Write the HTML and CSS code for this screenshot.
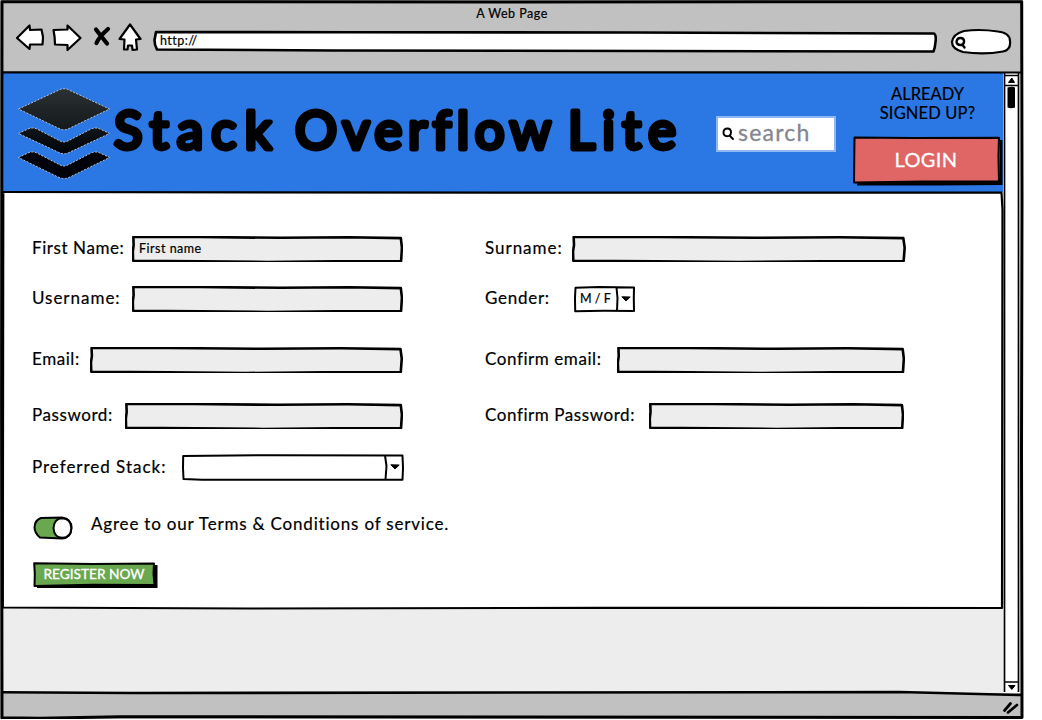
FILE: index.html
```
<!DOCTYPE html>
<html lang="en">
<head>
<meta charset="utf-8">
<title>Stack Overflow Lite</title>
<link rel="stylesheet" href="styles.css">
</head>
<body>
<svg class="defs" aria-hidden="true">
  <symbol id="box" viewBox="0 0 100 100" preserveAspectRatio="none">
    <path class="sketch" d="M.5 4 L25 4 L55 7 L80 5 L99.2 8 L99.600 45 L99.3 96 L75 97 L50 100 L25 97 L.4 95 L.3 60 L.6 35 Z"/>
  </symbol>
  <symbol id="caret" viewBox="0 0 10 6"><path d="M.8 .8 L9.2 1 L5 5 Z" fill="#000" stroke="#000" stroke-linejoin="round"/></symbol>
</svg>
<div class="window">
  <header class="chrome">
    <div class="chrome-title"><span class="t-page">A Web Page</span></div>
    <div class="toolbar">
      <svg class="nav-icons" viewBox="0 0 130 32">
        <g fill="#fff" stroke="#000" stroke-width="2.2" stroke-linejoin="round">
          <path d="M2 15 L14.500 2.500 L15 7 L26.500 6.500 L28 14 L27.500 21.500 L15 21.500 L14.500 26 Z"/>
          <path d="M38.500 7 L52.500 6.500 L52.500 2.500 L65.500 15 L52.500 27 L52.500 22 L40 21.500 Q40 14 38.500 7 Z"/>
          <path d="M115 1.500 L125.500 16 L121 16.500 L122 26.500 L117.500 26.800 L117 22.500 L113 22.500 L112.500 26.500 L109 26.500 L109.500 16.500 L104.500 16 Z"/>
        </g>
        <path d="M81 6.500 L86 13 L92 20.500 M93 6 Q84 14 81.500 20" fill="none" stroke="#000" stroke-width="4.200" stroke-linecap="round"/>
      </svg>
      <div class="address">
        <svg class="outline" viewBox="0 0 784 24" preserveAspectRatio="none"><path class="sketch" d="M3 2 L200 2.300 L480 2.500 L781 3.500 Q783.500 5 782.500 12 Q782 18 780.500 21.500 L500 21 L180 20.500 L4 19.500 Q1.500 15 1.500 10 Z"/></svg>
        <span class="t-url">http://</span>
      </div>
      <svg class="chrome-search" viewBox="0 0 62 28">
        <path d="M14 3 Q30 .8 48 3.500 Q60 5 60 13 Q61 22 53 23.500 Q34 27 13 24 Q2 21 2 14 Q3 6 14 3 Z" fill="#fff" stroke="#000" stroke-width="2.200"/>
        <path d="M6.500 14 Q7 9.500 11 10 Q14.500 10.500 14 14 Q13.500 17 10.500 17 Q7 17 6.500 14 M12.500 17 L14.500 19.500" fill="none" stroke="#000" stroke-width="2.400" stroke-linecap="round"/>
      </svg>
    </div>
  </header>
  <div class="viewport">
    <main class="page">
      <section class="banner">
        <svg class="logo" viewBox="0 0 92 92">
          <defs><linearGradient id="top" x1="0" y1="0" x2="0" y2="1"><stop offset="0" stop-color="#2b3033"/><stop offset="1" stop-color="#14191b"/></linearGradient>
          <linearGradient id="mid" x1="0" y1="0" x2="0" y2="1"><stop offset="0" stop-color="#10161a"/><stop offset="1" stop-color="#000207"/></linearGradient></defs>
          <g stroke="#c8cdd6" stroke-width=".9" stroke-dasharray="2 1.500" stroke-linejoin="round">
            <path fill="url(#top)" d="M.5 21 L40 2.500 Q46 -1 52 2.500 L91.500 21 L52 40 Q46 43.500 40 40 Z"/>
            <path fill="url(#mid)" d="M.5 45.500 L10 41 Q14 39 19 41 L42 53 Q46 55 50 53 L73 41 Q78 39 82 41 L91.500 45.500 L52 64 Q46 67.500 40 64 Z"/>
            <path fill="#02030a" d="M.5 69.500 L10 65 Q14 63 19 65 L42 77 Q46 79 50 77 L73 65 Q78 63 82 65 L91.500 69.500 L52 89 Q46 92 40 89 Z"/>
          </g>
        </svg>
        <svg class="brand" viewBox="0 0 570 70"><text y="50.500"><tspan x="4" textLength="157.500">Stack</tspan> <tspan x="185" textLength="255">Overflow</tspan> <tspan x="458" textLength="108">Lite</tspan></text></svg>
        <div class="search">
          <svg class="search-icon" viewBox="0 0 12 14"><path d="M1.500 5.500 Q1.500 1.500 5.500 1.500 Q9 1.500 9 5.500 Q8.800 9.200 5 9.200 Q1.500 9 1.500 5.500 M8 9 L11 12" fill="none" stroke="#000" stroke-width="1.900" stroke-linecap="round"/></svg>
          <span class="t-search">search</span>
        </div>
        <div class="account">
          <p class="hint"><span class="t-already">ALREADY</span><br><span class="t-signed">SIGNED UP?</span></p>
          <div class="btn login">
            <svg class="outline" viewBox="0 0 148 50" preserveAspectRatio="none"><path d="M5 44 L146 44 V4 H148.500 V49 L80 49.500 L4 49.500 Z" fill="#000"/><path class="sketch thin" d="M1.500 1.500 L60 2 L145 1.800 L144.500 20 L145 45.500 L70 45.500 L1 46.500 L1.200 25 Z"/></svg>
            <span class="t-login">LOGIN</span>
          </div>
        </div>
      </section>
      <section class="form">
        <div class="row r1">
          <div class="cell"><label class="t-first">First Name:</label><div class="field"><svg class="outline"><use href="#box"/></svg><span class="t-value">First name</span></div></div>
          <div class="cell"><label class="t-sur">Surname:</label><div class="field surname"><svg class="outline"><use href="#box"/></svg></div></div>
        </div>
        <div class="row r2">
          <div class="cell"><label class="t-user">Username:</label><div class="field"><svg class="outline"><use href="#box"/></svg></div></div>
          <div class="cell"><label class="t-gender">Gender:</label>
            <div class="select gender"><svg class="outline" viewBox="0 0 61 26"><path class="sketch thin" d="M1.500 1.800 L25 1 L60 1.500 L59.800 12 L60 25 L30 24.800 L1.200 25.200 L1 12 Z M42.500 1.500 L43.500 12 L43 25"/></svg><span class="t-mf">M / F</span><svg class="caret"><use href="#caret"/></svg></div></div>
        </div>
        <div class="row r3">
          <div class="cell"><label class="t-email">Email:</label><div class="field email"><svg class="outline"><use href="#box"/></svg></div></div>
          <div class="cell"><label class="t-cemail">Confirm email:</label><div class="field cemail"><svg class="outline"><use href="#box"/></svg></div></div>
        </div>
        <div class="row r4">
          <div class="cell"><label class="t-pass">Password:</label><div class="field pass"><svg class="outline"><use href="#box"/></svg></div></div>
          <div class="cell"><label class="t-cpass">Confirm Password:</label><div class="field cpass"><svg class="outline"><use href="#box"/></svg></div></div>
        </div>
        <div class="row r5">
          <div class="cell"><label class="t-stack">Preferred Stack:</label>
            <div class="select stack"><svg class="outline" viewBox="0 0 222 27"><path class="sketch thin" d="M1.200 2 L90 1.200 L220.500 1.500 L221 14 L220.500 25.700 L20 25.800 L1.500 25 L1 14 Z M203 1.500 L204.500 12 L203.500 25.500"/></svg><svg class="caret"><use href="#caret"/></svg></div></div>
        </div>
        <div class="terms">
          <svg class="toggle" viewBox="0 0 40 24"><path fill="#6aa84f" stroke="#000" stroke-width="2" d="M8 2 L29 1.500 Q38.500 3 38.500 12 Q38 22 29 22.500 L7 21.500 Q1.500 17 1.500 11 Q2 4 8 2 Z"/><path fill="#fff" stroke="#000" stroke-width="2" d="M20.500 12 Q21 2.500 29.500 2.300 Q38 3 38.300 12 Q38 21.500 29.500 21.800 Q21 21.500 20.500 12 Z"/></svg>
          <span class="t-terms">Agree to our Terms &amp; Conditions of service.</span>
        </div>
        <div class="btn register">
          <svg class="outline" viewBox="0 0 125 26" preserveAspectRatio="none"><path d="M4 22 L121 22 V3 H124.500 V26 H4 Z" fill="#000"/><path class="sketch thin" d="M1.200 1.200 L60 2 L121 1.500 L120.500 12 L121.500 23 L60 22.800 L1.500 24 L1.800 12 Z"/></svg>
          <span class="t-reg">REGISTER NOW</span>
        </div>
      </section>
    </main>
    <aside class="scrollbar">
      <svg viewBox="0 0 18 620">
        <path d="M1.500 0 V619 M1.500 12.500 H16 M1.500 609 H16 M1.500 2.500 H15.500 M15.500 0 V619" fill="none" stroke="#000" stroke-width="1.700"/>
        <path d="M5.500 9.500 L8.800 5 L11.500 9.500 Z M5.500 612.500 H12 L8.800 616.500 Z" stroke="#000" stroke-linejoin="round"/>
        <path d="M4.500 14.500 Q9 13 12 14.500 L12 34.500 Q8 36 4.500 34.500 Z"/>
      </svg>
    </aside>
  </div>
  <footer class="status"><svg viewBox="0 0 18 16"><path d="M2.500 12.500 L8.500 5.500 M6 14.500 L15 7" transform="translate(0,-1)" stroke="#000" stroke-width="2.700" stroke-linecap="round"/></svg></footer>
  <svg class="frame" viewBox="0 0 1042 720">
    <g fill="none" stroke="#000" stroke-width="2.200" stroke-linejoin="round">
      <path stroke-width="3" d="M2 1.700 L500 1.900 L1021.700 1.700 L1022 200 L1021.500 450 L1022 717.500 L500 717 L120 716.800 L40 718.200 L2 717.800 L1.600 400 Z"/>
      <path d="M2 72.300 L1021 72.500 M2 192 L500 192.600 L1001.500 192.500 L1002.500 210 L1002 608 L600 607.800 L250 608.500 L2 607.500 M3.300 192 L2.800 607"/>
      <path stroke-width="2.600" d="M2 692.300 L130 693 L900 692 L1021 695"/>
    </g>
  </svg>
</div>
</body>
</html>
```
FILE: styles.css
```
* { box-sizing: border-box; }
body { margin: 0; background: #fff; color: #000; font-family: Lato, "Open Sans", sans-serif; font-size: 17px; font-variant-ligatures: none; }
.defs { display: block; width: 0; height: 0; }
.window { position: relative; width: 1023px; height: 719px; padding: 1px; display: flex; flex-direction: column; background: #c1c1c1; }
.frame { position: absolute; left: 0; top: 0; width: 1042px; height: 720px; pointer-events: none; }
.outline { position: absolute; left: 0; top: 0; width: 100%; height: 100%; overflow: visible; z-index: -1; }
.sketch { stroke: #000; stroke-width: 2.6px; stroke-linejoin: round; fill: #ededed; vector-effect: non-scaling-stroke; }
.thin { stroke-width: 2px; }
label, .t-terms, .t-page, .t-url, .t-value, .t-mf, .hint { -webkit-text-stroke: .2px #000; }

.chrome { height: 72px; flex: none; }
.chrome-title { height: 22px; line-height: 26px; padding-left: 1px; font-size: 12.5px; text-align: center; }
.t-page { letter-spacing: .5px; }
.toolbar { display: flex; align-items: flex-start; padding-left: 14px; }
.nav-icons { width: 130px; height: 32px; margin-right: 8px; }
.address { position: relative; z-index: 0; width: 784px; height: 24px; margin-top: 7px; padding-left: 7px; font-size: 12.5px; line-height: 22px; }
.address .sketch { fill: #fff; }
.t-url { letter-spacing: .45px; }
.chrome-search { width: 62px; height: 28px; margin: 5px 0 0 13px; }

.viewport { display: flex; height: 620px; flex: none; background: #ededed; }
.page { width: 1002px; }
.banner { height: 119px; background: #2b78e4; display: flex; padding-left: 17px; }
.logo { width: 92px; height: 92px; margin-top: 15px; flex: none; overflow: visible; }
.brand { width: 570px; height: 70px; margin-top: 25px; flex: none; overflow: visible; }
.brand text { font-size: 52.5px; font-weight: 400; stroke: #000; stroke-width: 4.8px; stroke-linejoin: round; }
.search { flex: none; width: 120px; height: 36px; margin: 43px 0 0 36px; border: 2.5px solid #8fb7f2; background: #fff; display: flex; padding-left: 4px; color: #85858f; font-size: 23px; line-height: 29px; }
.search-icon { width: 12px; height: 14px; margin: 9px 4px 0 0; }
.t-search { letter-spacing: 1.2px; -webkit-text-stroke: .3px #85858f; }
.account { margin-left: 17px; width: 149px; }
.hint { margin: 12px 0 0; text-align: center; font-size: 16.5px; line-height: 19px; }
.t-signed { letter-spacing: .15px; }
.btn { position: relative; z-index: 0; color: #fff; text-align: center; }
.login { width: 149px; height: 50px; margin-top: 13px; line-height: 47px; font-size: 20px; padding-right: 3px; }
.t-login { letter-spacing: .4px; -webkit-text-stroke: .3px #fff; }
.login .sketch { fill: #e06666; }
.register .sketch { fill: #6aa84f; }

.form { height: 416px; background: #fff; padding: 44px 0 0 31px; }
.row { display: grid; grid-template-columns: 453px 1fr; height: 26px; }
.r1 { margin-bottom: 24px; }
.r2 { margin-bottom: 34.5px; }
.r3 { margin-bottom: 30px; }
.r4 { margin-bottom: 25.5px; }
.cell { display: flex; justify-content: flex-start; line-height: 24px; white-space: nowrap; }
.cell:first-child { width: 371px; justify-content: space-between; }
.t-first { letter-spacing: .58px; }
.t-sur, .t-user, .t-stack { letter-spacing: .98px; }
.t-gender { letter-spacing: .72px; }
.t-email, .t-cemail, .t-pass, .t-cpass { letter-spacing: .57px; }
.t-value { letter-spacing: .5px; }
.field { position: relative; z-index: 0; width: 271px; height: 26px; padding-left: 7px; font-size: 12.5px; line-height: 26px; }
.select { position: relative; z-index: 0; display: flex; font-size: 12.5px; line-height: 26px; }
.select .sketch { fill: #fff; }
.field.email { width: 313px; }
.field.pass { width: 278px; }
.field.surname { width: 334px; margin-left: auto; margin-right: 97px; }
.field.cemail { width: 288px; margin-left: auto; margin-right: 98px; }
.field.cpass { width: 255px; margin-left: auto; margin-right: 99px; }
.gender { width: 61px; height: 26px; margin-left: auto; margin-right: 368px; padding-left: 6px; }
.stack { width: 222px; height: 27px; margin-right: -1px; }
.r5 .t-stack { line-height: 26px; }
.caret { width: 10px; height: 6px; margin: 10px 4px 0 auto; }
.terms { display: flex; margin-top: 35px; line-height: 17px; }
.t-terms { letter-spacing: .81px; }
.toggle { width: 40px; height: 24px; margin: 1px 18px 0 1px; }
.register { width: 125px; height: 26px; margin: 22px 0 0 1px; font-size: 13.7px; line-height: 24px; padding-right: 3px; }
.t-reg { -webkit-text-stroke: .3px #fff; }
.scrollbar { width: 18px; background: #fff; }
.scrollbar svg { display: block; width: 18px; height: 620px; }
.status { height: 25px; display: flex; justify-content: flex-end; padding: 6px 2px 0 0; }
.status svg { width: 18px; height: 16px; }
```
